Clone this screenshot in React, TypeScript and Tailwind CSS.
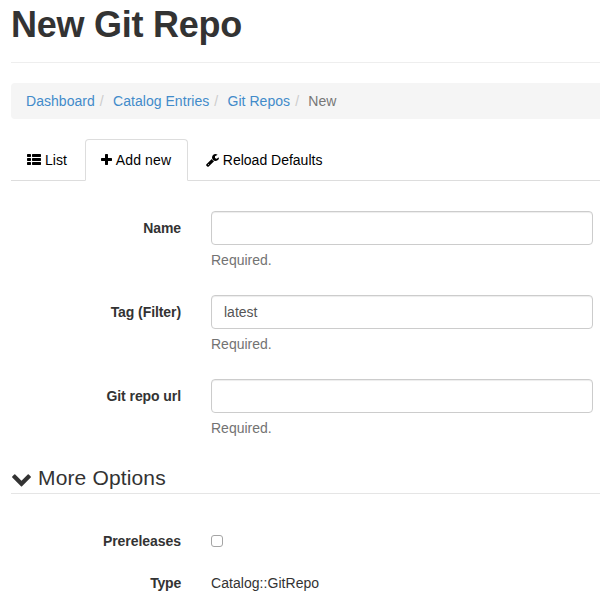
import React from "react";

const icons = {
  list: "M512 1248v192q0 40-28 68t-68 28h-320q-40 0-68-28t-28-68v-192q0-40 28-68t68-28h320q40 0 68 28t28 68zm0-512v192q0 40-28 68t-68 28h-320q-40 0-68-28t-28-68v-192q0-40 28-68t68-28h320q40 0 68 28t28 68zm1280 512v192q0 40-28 68t-68 28h-960q-40 0-68-28t-28-68v-192q0-40 28-68t68-28h960q40 0 68 28t28 68zm-1280-1024v192q0 40-28 68t-68 28h-320q-40 0-68-28t-28-68v-192q0-40 28-68t68-28h320q40 0 68 28t28 68zm1280 512v192q0 40-28 68t-68 28h-960q-40 0-68-28t-28-68v-192q0-40 28-68t68-28h960q40 0 68 28t28 68zm0-512v192q0 40-28 68t-68 28h-960q-40 0-68-28t-28-68v-192q0-40 28-68t68-28h960q40 0 68 28t28 68z",
  plus: "M1600 736v192q0 40-28 68t-68 28h-416v416q0 40-28 68t-68 28h-192q-40 0-68-28t-28-68v-416h-416q-40 0-68-28t-28-68v-192q0-40 28-68t68-28h416v-416q0-40 28-68t68-28h192q40 0 68 28t28 68v416h416q40 0 68 28t28 68z",
  wrench:
    "M448 1472q0-26-19-45t-45-19-45 19-19 45 19 45 45 19 45-19 19-45zm644-420l-682 682q-37 37-90 37-52 0-91-37l-106-108q-38-36-38-90 0-53 38-91l681-681q39 98 114.500 173.500t173.500 114.500zm634-435q0 39-23 106-47 134-164.500 217.500t-258.500 83.500q-185 0-316.500-131.500t-131.500-316.500 131.500-316.500 316.500-131.500q58 0 121.500 16.500t107.500 46.500q16 11 16 28t-16 28l-293 169v224l193 107q5-3 79-48.500t135.500-81 70.500-35.500q15 0 23.500 10t8.500 25z",
  chevron:
    "M1683 808l-742 741q-19 19-45 19t-45-19l-742-741q-19-19-19-45.500t19-45.500l166-165q19-19 45-19t45 19l531 531 531-531q19-19 45-19t45 19l166 165q19 19 19 45.500t-19 45.500z",
};

function Icon({ path, viewBox = "0 0 1792 1792", className }: { path: string; viewBox?: string; className: string }) {
  return (
    <svg viewBox={viewBox} className={`block shrink-0 fill-current ${className}`} aria-hidden="true">
      <path d={path} />
    </svg>
  );
}

function Field({ label, value = "" }: { label: string; value?: string }) {
  return (
    <div className="mb-[15px] flex">
      <label className="w-[170px] shrink-0 pt-[7px] text-right font-bold tracking-[-0.08px]">{label}</label>
      <div className="ml-[30px] w-[382px] shrink-0">
        <input
          type="text"
          defaultValue={value}
          className="block h-[34px] w-full rounded-[4px] border border-[#ccc] bg-white px-3 py-1.5 text-[#555] shadow-[inset_0_1px_1px_rgba(0,0,0,0.075)] outline-none"
        />
        <p className="mt-[5px] mb-[10px] text-[#737373]">Required.</p>
      </div>
    </div>
  );
}

const crumbs = ["Dashboard", "Catalog Entries", "Git Repos"];

export default function App() {
  return (
    <div className="h-[600px] w-[600px] overflow-hidden bg-white pl-[11px] font-['Helvetica_Neue','Liberation_Sans',Arial,sans-serif] text-[14px] leading-5 text-[#333]">
      <header className="h-[63px] border-b border-[#eee] pt-[5px]">
        <h1 className="text-[36px] leading-10 font-bold tracking-[-0.25px]">New Git Repo</h1>
      </header>

      <nav className="mt-5 flex h-9 items-center rounded-l-[4px] bg-[#f5f5f5] pl-[15px]">
        {crumbs.map((crumb) => (
          <React.Fragment key={crumb}>
            <a className="tracking-[0.04px] text-[#428bca]">{crumb}</a>
            <span className="pr-[5.4px] pl-[5px] text-[#ccc]">/&nbsp;</span>
          </React.Fragment>
        ))}
        <span className="text-[#777]">New</span>
      </nav>

      <ul className="mt-5 flex h-[42px] border-b border-[#ddd] text-black">
        <li className="mr-[2px] flex h-[42px] items-center gap-[4px] px-4">
          <Icon path={icons.list} className="h-[14px] w-[14px]" />
          List
        </li>
        <li className="mr-[2px] flex h-[42px] w-[103px] items-center gap-[4px] rounded-t-[4px] border border-[#ddd] border-b-white bg-white pl-[15px] tracking-[0.12px]">
          <Icon path={icons.plus} viewBox="192 0 1408 1792" className="h-[14px] w-[11px]" />
          Add new
        </li>
        <li className="flex h-[42px] items-center gap-[4px] px-4">
          <Icon path={icons.wrench} viewBox="64 0 1664 1792" className="h-[14px] w-[13px]" />
          Reload Defaults
        </li>
      </ul>

      <form className="mt-[30px]">
        <Field label="Name" />
        <Field label="Tag (Filter)" value="latest" />
        <Field label="Git repo url" />

        <h2 className="mt-[1px] flex h-[31px] items-center gap-[6px] border-b border-[#e5e5e5] text-[21px] leading-[30px]">
          <Icon path={icons.chevron} className="h-[21px] w-[21px]" />
          <span className="tracking-[0.15px]">More Options</span>
        </h2>

        <div className="mt-[30px] flex h-[27px] pt-[7px]">
          <label className="w-[170px] text-right font-bold tracking-[-0.05px]">Prereleases</label>
          <input
            type="checkbox"
            className="mt-1 ml-[30px] h-3 w-3 appearance-none rounded-[3px] border border-[#a5a5a5] bg-white"
          />
        </div>
        <div className="mt-[15px] flex h-[27px] pt-[7px]">
          <label className="w-[170px] text-right font-bold tracking-[-0.2px]">Type</label>
          <p className="ml-[30px] tracking-[0.05px]">Catalog::GitRepo</p>
        </div>
      </form>
    </div>
  );
}
